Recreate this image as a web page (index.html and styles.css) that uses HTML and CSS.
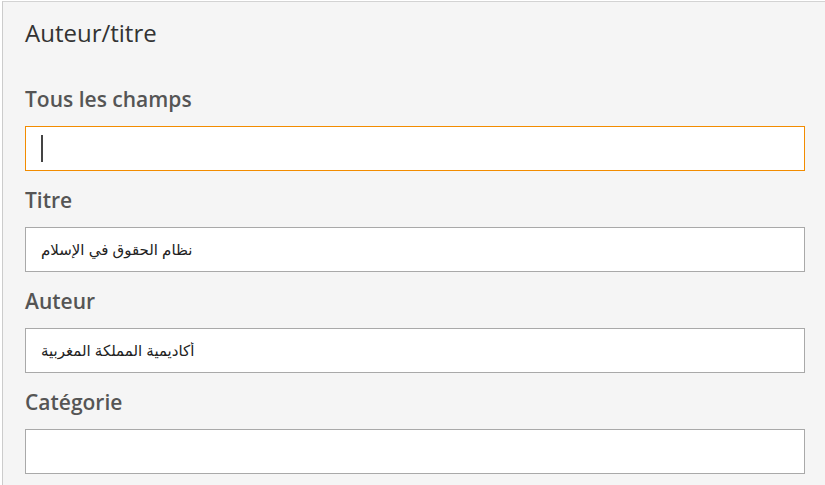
FILE: index.html
```html
<!DOCTYPE html>
<html lang="fr">
<head>
<meta charset="utf-8">
<title>Recherche</title>
<link rel="stylesheet" href="styles.css">
</head>
<body>
<div class="panel">
  <h2 class="panel-title">Auteur/titre</h2>
  <div class="field">
    <label class="field-label" for="all">Tous les champs</label>
    <div class="input-wrap">
      <input class="field-input is-focused" id="all" type="text" value="">
      <span class="caret"></span>
    </div>
  </div>
  <div class="field">
    <label class="field-label" for="title">Titre</label>
    <input class="field-input" id="title" type="text" value="نظام الحقوق في الإسلام">
  </div>
  <div class="field">
    <label class="field-label" for="author">Auteur</label>
    <input class="field-input" id="author" type="text" value="أكاديمية المملكة المغربية">
  </div>
  <div class="field">
    <label class="field-label" for="cat">Catégorie</label>
    <input class="field-input" id="cat" type="text" value="">
  </div>
</div>
</body>
</html>
```

FILE: styles.css
```css
html, body {
  margin: 0;
  padding: 0;
  background: #ffffff;
  overflow: hidden;
}

body {
  font-family: "Open Sans", "Noto Sans", sans-serif;
}

.panel {
  display: flex;
  flex-direction: column;
  margin: 1px 0 0 2px;
  width: 780px;
  min-height: 484px;
  padding: 16px 22px 0 22px;
  box-sizing: content-box;
  background: #f5f5f5;
  border-top: 1px solid #d3d3d3;
  border-left: 1px solid #cccccc;
}

.panel-title {
  margin: 0 0 22px 0;
  font-size: 24px;
  line-height: 30px;
  font-weight: 400;
  color: #333333;
}

.field {
  display: flex;
  flex-direction: column;
  margin-top: 15px;
}

.field-label {
  font-size: 21px;
  line-height: 28px;
  font-weight: 600;
  color: #555555;
  margin-bottom: 13px;
}

.input-wrap {
  position: relative;
}

.field-input {
  display: block;
  box-sizing: border-box;
  width: 780px;
  height: 45px;
  margin: 0;
  padding: 0 15px;
  border: 1px solid #a9a9a9;
  border-radius: 0;
  background: #ffffff;
  font-family: "Liberation Sans", "DejaVu Sans", sans-serif;
  font-size: 15px;
  color: #222222;
  outline: none;
  caret-color: transparent;
}

.field-input.is-focused {
  border-color: #f28c00;
}

.caret {
  position: absolute;
  left: 16px;
  top: 9px;
  width: 2px;
  height: 27px;
  background: #444444;
}
```
